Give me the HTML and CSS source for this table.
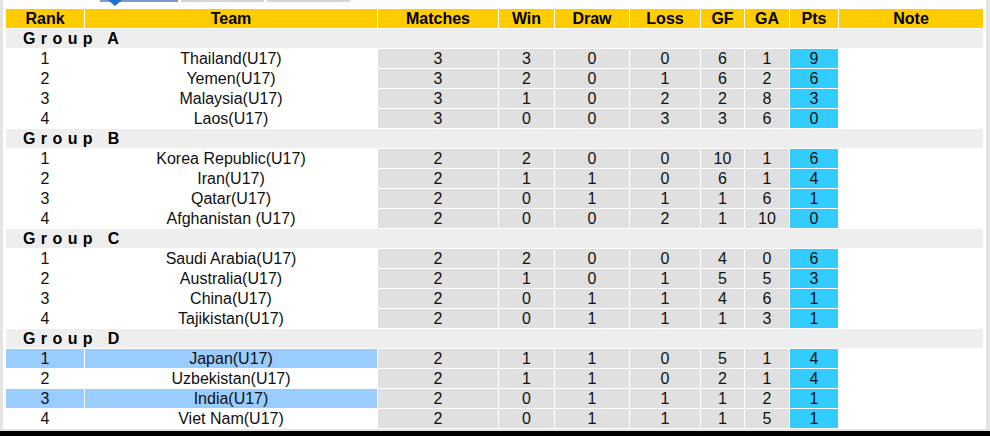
FILE: index.html
```html
<!DOCTYPE html>
<html lang="en">
<head>
<meta charset="utf-8">
<title>Standings</title>
<link rel="stylesheet" href="styles.css">
</head>
<body>
<div class="page">
  <div class="tabs">
    <div class="tab tab-active"><span class="arrow"></span></div>
    <div class="tab"></div>
    <div class="tab"></div>
  </div>
  <table class="standings">
    <colgroup>
      <col class="c-rank"><col class="c-team"><col class="c-m"><col class="c-w"><col class="c-d"><col class="c-l"><col class="c-gf"><col class="c-ga"><col class="c-pts"><col class="c-note">
    </colgroup>
    <thead>
      <tr><th>Rank</th><th>Team</th><th>Matches</th><th>Win</th><th>Draw</th><th>Loss</th><th>GF</th><th>GA</th><th>Pts</th><th>Note</th></tr>
    </thead>
    <tbody>
      <tr class="group"><td colspan="10">Group A</td></tr>
      <tr><td>1</td><td>Thailand(U17)</td><td class="s">3</td><td class="s">3</td><td class="s">0</td><td class="s">0</td><td class="s">6</td><td class="s">1</td><td class="p">9</td><td></td></tr>
      <tr><td>2</td><td>Yemen(U17)</td><td class="s">3</td><td class="s">2</td><td class="s">0</td><td class="s">1</td><td class="s">6</td><td class="s">2</td><td class="p">6</td><td></td></tr>
      <tr><td>3</td><td>Malaysia(U17)</td><td class="s">3</td><td class="s">1</td><td class="s">0</td><td class="s">2</td><td class="s">2</td><td class="s">8</td><td class="p">3</td><td></td></tr>
      <tr><td>4</td><td>Laos(U17)</td><td class="s">3</td><td class="s">0</td><td class="s">0</td><td class="s">3</td><td class="s">3</td><td class="s">6</td><td class="p">0</td><td></td></tr>
      <tr class="group"><td colspan="10">Group B</td></tr>
      <tr><td>1</td><td>Korea Republic(U17)</td><td class="s">2</td><td class="s">2</td><td class="s">0</td><td class="s">0</td><td class="s">10</td><td class="s">1</td><td class="p">6</td><td></td></tr>
      <tr><td>2</td><td>Iran(U17)</td><td class="s">2</td><td class="s">1</td><td class="s">1</td><td class="s">0</td><td class="s">6</td><td class="s">1</td><td class="p">4</td><td></td></tr>
      <tr><td>3</td><td>Qatar(U17)</td><td class="s">2</td><td class="s">0</td><td class="s">1</td><td class="s">1</td><td class="s">1</td><td class="s">6</td><td class="p">1</td><td></td></tr>
      <tr><td>4</td><td>Afghanistan (U17)</td><td class="s">2</td><td class="s">0</td><td class="s">0</td><td class="s">2</td><td class="s">1</td><td class="s">10</td><td class="p">0</td><td></td></tr>
      <tr class="group"><td colspan="10">Group C</td></tr>
      <tr><td>1</td><td>Saudi Arabia(U17)</td><td class="s">2</td><td class="s">2</td><td class="s">0</td><td class="s">0</td><td class="s">4</td><td class="s">0</td><td class="p">6</td><td></td></tr>
      <tr><td>2</td><td>Australia(U17)</td><td class="s">2</td><td class="s">1</td><td class="s">0</td><td class="s">1</td><td class="s">5</td><td class="s">5</td><td class="p">3</td><td></td></tr>
      <tr><td>3</td><td>China(U17)</td><td class="s">2</td><td class="s">0</td><td class="s">1</td><td class="s">1</td><td class="s">4</td><td class="s">6</td><td class="p">1</td><td></td></tr>
      <tr><td>4</td><td>Tajikistan(U17)</td><td class="s">2</td><td class="s">0</td><td class="s">1</td><td class="s">1</td><td class="s">1</td><td class="s">3</td><td class="p">1</td><td></td></tr>
      <tr class="group"><td colspan="10">Group D</td></tr>
      <tr class="hl"><td>1</td><td>Japan(U17)</td><td class="s">2</td><td class="s">1</td><td class="s">1</td><td class="s">0</td><td class="s">5</td><td class="s">1</td><td class="p">4</td><td></td></tr>
      <tr><td>2</td><td>Uzbekistan(U17)</td><td class="s">2</td><td class="s">1</td><td class="s">1</td><td class="s">0</td><td class="s">2</td><td class="s">1</td><td class="p">4</td><td></td></tr>
      <tr class="hl"><td>3</td><td>India(U17)</td><td class="s">2</td><td class="s">0</td><td class="s">1</td><td class="s">1</td><td class="s">1</td><td class="s">2</td><td class="p">1</td><td></td></tr>
      <tr><td>4</td><td>Viet Nam(U17)</td><td class="s">2</td><td class="s">0</td><td class="s">1</td><td class="s">1</td><td class="s">1</td><td class="s">5</td><td class="p">1</td><td></td></tr>
    </tbody>
  </table>
</div>
<div class="bottom-bar"></div>
</body>
</html>
```

FILE: styles.css
```css
html, body {
  margin: 0;
  padding: 0;
  background: #ffffff;
}
body {
  font-family: "Liberation Sans", Arial, sans-serif;
  color: #111;
}
.page {
  width: 990px;
  border-left: 3px solid #e4e4e4;
  border-right: 4px solid #e4e4e4;
  border-bottom: 2px solid #e4e4e4;
  box-sizing: border-box;
  padding-left: 2px;
}
.tabs {
  display: flex;
  gap: 3px;
  height: 8px;
  padding-left: 95px;
}
.tab {
  width: 83px;
  height: 2px;
  background: #d6d6d6;
  position: relative;
}
.tab-active {
  width: 78px;
  background: #7d9bc6;
}
.arrow {
  position: absolute;
  left: 8px;
  top: 0;
  width: 0;
  height: 0;
  border-left: 7px solid transparent;
  border-right: 7px solid transparent;
  border-top: 6px solid #1f6fd1;
}
.standings {
  border-collapse: separate;
  border-spacing: 1px;
  table-layout: fixed;
  width: 979px;
  font-size: 16px;
}
.c-rank { width: 78px; }
.c-team { width: 292px; }
.c-m { width: 120px; }
.c-w { width: 55px; }
.c-d { width: 74px; }
.c-l { width: 70px; }
.c-gf { width: 43px; }
.c-ga { width: 44px; }
.c-pts { width: 48px; }
.c-note { width: 144px; }
.standings th,
.standings td {
  padding: 0;
  height: 19px;
  line-height: 19px;
  text-align: center;
  white-space: nowrap;
  overflow: hidden;
}
.standings th {
  background: #ffcc00;
  font-weight: bold;
  color: #000;
}
.standings td.s {
  background: #e0e0e0;
}
.standings td.p {
  background: #33ccff;
}
.standings tr.hl td:nth-child(-n+2) {
  background: #99ccff;
}
.standings tr.group td {
  background: #eeeeee;
  text-align: left;
  padding-left: 17px;
  font-weight: bold;
  letter-spacing: 5.4px;
  color: #000;
}
.bottom-bar {
  height: 5px;
  background: #000;
}
```
